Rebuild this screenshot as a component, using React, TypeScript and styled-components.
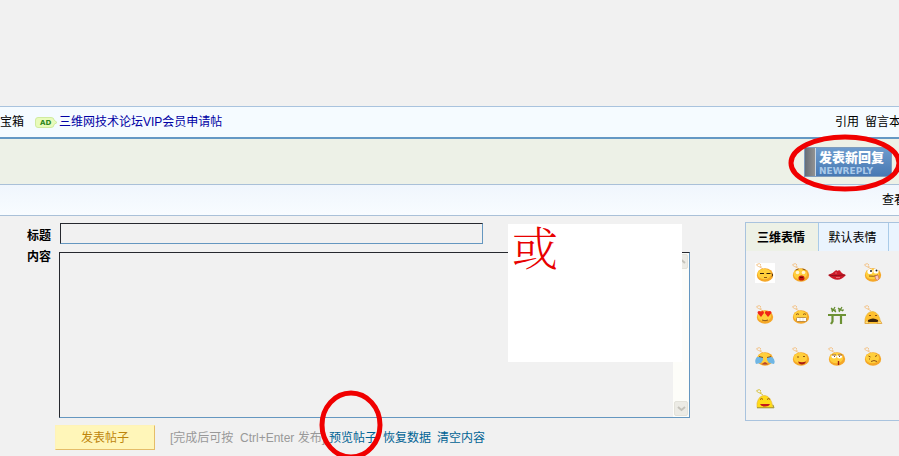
import React from 'react';
import styled, { createGlobalStyle, css } from 'styled-components';

const GlobalStyle = createGlobalStyle`
  * { box-sizing: border-box; }
  body {
    margin: 0;
    overflow: hidden;
    background: #f1f1f1;
    color: #000;
    font: 12px/16px "Liberation Sans", "Noto Sans CJK SC", sans-serif;
  }
  button, input, textarea { font: inherit; }
`;

const Page = styled.div`
  min-height: 100vh;
  padding-top: 106px;
  overflow: hidden;
  white-space: nowrap;
`;

const NavBar = styled.nav`
  display: flex;
  align-items: center;
  height: 33px;
  border-top: 1px solid #a9c3de;
  border-bottom: 2px solid #6498c4;
  background: #f5fbff;
`;

const NavLink = styled.a<{ $tone?: 'blue' }>`
  color: ${p => (p.$tone === 'blue' ? '#0000a4' : '#000')};
  text-decoration: none;
`;

const AdBadge = styled.svg`
  flex: none;
  width: 23px;
  height: 11px;
  margin: 0 1px 0 11px;
`;

const EdgeLinks = styled.div<{ $width: number }>`
  display: flex;
  gap: 6px;
  width: ${p => p.$width}px;
  margin-left: auto;
`;

const ReplyBand = styled.div`
  display: flex;
  justify-content: flex-end;
  align-items: center;
  height: 45px;
  padding-right: 7px;
  background: #edf1e7;
`;

const Marked = styled.div`
  position: relative;
  display: flex;
`;

const ReplyButton = styled.button`
  display: flex;
  align-items: stretch;
  width: 88px;
  height: 30px;
  padding: 0;
  border: 1px solid #7e9cbd;
  background: linear-gradient(#6d9bcd, #4879b3);
  color: #fff;
  text-align: left;
`;

const ReplyStripe = styled.span`
  width: 11px;
  border-right: 1px solid #c9d5e1;
  background: linear-gradient(90deg, #666e78, #929292);
`;

const ReplyText = styled.span`
  display: flex;
  flex: 1;
  flex-direction: column;
  justify-content: center;
  padding-left: 3px;
  font-size: 13px;
  font-weight: 900;
  line-height: 18px;
`;

const ReplyCaption = styled.small`
  color: #a9c9ea;
  font: bold 9px/8px "DejaVu Sans", sans-serif;
`;

const RedRing = styled.svg<{ $top: number; $left: number; $w: number; $h: number }>`
  position: absolute;
  top: ${p => p.$top}px;
  left: ${p => p.$left}px;
  width: ${p => p.$w}px;
  height: ${p => p.$h}px;
  overflow: visible;
  pointer-events: none;
  z-index: 2;
`;

const SubBar = styled.div`
  display: flex;
  align-items: center;
  height: 32px;
  border: solid #a9c0d8;
  border-width: 1px 0;
  background: linear-gradient(#f0f6fd, #f8fcff);
`;

const Main = styled.main`
  display: flex;
  align-items: flex-start;
  gap: 55px;
  padding-top: 6px;
`;

const Form = styled.form`
  position: relative;
  flex: 1;
  min-width: 0;
  display: grid;
  grid-template-columns: 51px minmax(0, 1fr);
  column-gap: 8px;
  row-gap: 8px;
  padding-top: 1px;
`;

const FieldLabel = styled.label`
  padding-top: 5px;
  text-align: right;
  font-weight: bold;
  &[for='content'] { padding-top: 0; margin-top: -3px; }
`;

const fieldEdge = css`
  border: 1px solid;
  border-color: #26282e #6597c0 #6597c0 #26282e;
`;

const TitleInput = styled.input`
  ${fieldEdge}
  width: 67%;
  height: 21px;
  padding: 0 4px;
  margin-left: 1px;
  background: transparent;
`;

const Editor = styled.div`
  ${fieldEdge}
  display: flex;
  height: 166px;
`;

const Content = styled.textarea`
  flex: 1;
  min-width: 0;
  padding: 2px;
  border: 0;
  resize: none;
  background: transparent;
`;

const ScrollTrack = styled.div`
  display: flex;
  flex-direction: column;
  justify-content: space-between;
  width: 16px;
  padding: 1px;
  background: #fdfdf9;
`;

const ScrollButton = styled.button`
  display: flex;
  align-items: center;
  justify-content: center;
  height: 15px;
  padding: 0;
  border: 1px solid #e3e2da;
  border-radius: 2px;
  background: #ecebe5;
`;

const Note = styled.div`
  position: absolute;
  top: 2px;
  right: 8px;
  width: 174px;
  height: 138px;
  padding-left: 4px;
  background: #fff;
  color: #e80000;
  font: 300 46px/42px "Noto Serif CJK SC", "Noto Sans CJK SC", serif;
`;

const Actions = styled.div`
  grid-column: 1 / -1;
  display: flex;
  align-items: center;
  gap: 6px;
  margin-top: -1px;
  padding-left: 55px;
`;

const Submit = styled.button`
  width: 100px;
  height: 25px;
  margin-right: 9px;
  padding: 1px 0 0;
  border: 1px solid;
  border-color: #fff3b8 #e5bd68 #e5bd68 #fff3b8;
  background: #fff6b9;
  color: #bd850c;
`;

const Hint = styled.span`
  width: 153px;
  padding-top: 1px;
  color: #999;
`;

const Action = styled.button`
  padding: 1px 0 0;
  border: 0;
  background: none;
  color: #006394;
`;

const Panel = styled.aside`
  width: 154px;
  height: 199px;
  border: solid #a9c3de;
  border-width: 1px 0 1px 1px;
`;

const Tabs = styled.div`
  display: flex;
  height: 28px;
`;

const Tab = styled.button<{ $active?: boolean }>`
  flex: none;
  width: ${p => (p.$active ? 73 : 70)}px;
  padding: 1px 2px 0 0;
  border: 0;
  border-right: 1px solid #a9cbe8;
  background: ${p => (p.$active ? '#edf1e6' : '#eaf4fe')};
  font-weight: ${p => (p.$active ? 'bold' : 'normal')};
`;

const TabRest = styled.div`
  flex: 1;
  background: #eaf4fe;
`;

const Faces = styled.div`
  display: grid;
  grid-template-columns: repeat(4, 20px);
  gap: 22px 16px;
  padding: 12px 0 0 9px;
`;

const FaceButton = styled.button<{ $white?: boolean }>`
  display: block;
  width: 20px;
  height: 20px;
  padding: 0;
  border: 0;
  background: ${p => (p.$white ? '#fff' : 'none')};
  svg { display: block; }
`;

const ink = { fill: 'none', stroke: '#8f5416', strokeWidth: 1 };

const features: Record<string, React.ReactNode> = {
  sleepy: (
    <>
      <path d="M5 10.500h4M11.500 10.500h4" fill="none" stroke="#33200b" strokeWidth="1.200" />
      <path d="M9 14.500h3" {...ink} />
      <path d="M17 10.500q1.500 1.500 0 3" fill="none" stroke="#5a3a14" />
    </>
  ),
  shocked: (
    <>
      <circle cx="6.500" cy="9.500" r="1.800" fill="#fff6d6" /><circle cx="12.500" cy="9.500" r="1.800" fill="#fff6d6" />
      <path d="M4.500 7l3-1M11.500 6l3 1" {...ink} />
      <ellipse cx="10.500" cy="15" rx="3" ry="2.600" fill="#c51a0c" />
      <path d="M9 14.500h3" stroke="#6d0b04" />
    </>
  ),
  tongue: (
    <>
      <circle cx="7" cy="8.500" r="2.600" fill="#fff" /><circle cx="13" cy="8" r="2.600" fill="#fff" />
      <circle cx="8" cy="8" r="1" fill="#222" /><circle cx="13.500" cy="7.500" r="1" fill="#222" />
      <path d="M6 13q5 1 9-1" {...ink} />
      <path d="M12 13l3-1 1 4q-1.500 2.500-3.500 0z" fill="#f9c5bc" stroke="#c9664e" strokeWidth=".6" />
    </>
  ),
  love: (
    <>
      <path d="M6 12L2.500 8Q2.500 5 6 6.500Q9 5 9 8zM13 12L9.800 8Q10 5 13 6.500Q16.500 5 16.500 8z" fill="#ef2517" />
      <path d="M7 15q3 1.500 6 0" {...ink} />
    </>
  ),
  grin: (
    <>
      <path d="M5 9.500q2-1.500 3 0M12 9.500q2-1.500 3 0" {...ink} />
      <rect x="5.500" y="12.500" width="10" height="4" rx="1" fill="#fff" stroke="#a8701f" strokeWidth=".7" />
      <path d="M9 13v3M12 13v3" stroke="#ccc" strokeWidth=".6" />
    </>
  ),
  cry: (
    <>
      <path d="M2 10h6v3l-2 3-5 1q-2-4 1-7zM12 10h5q4 3 2 7l-5-1-2-3z" fill="#6fb6e4" />
      <path d="M4 9.500l4 1M12 10.500l4-1" {...ink} />
      <path d="M7 17.500q3-5 6 0z" fill="#b8452c" />
    </>
  ),
  laugh: (
    <>
      <path d="M6 10h2M12 9.500h2" {...ink} />
      <path d="M7 14.500q4 1.500 8 0-1 3-4 3t-4-3z" fill="#a91d13" />
    </>
  ),
  drool: (
    <>
      <ellipse cx="7" cy="9.500" rx="2.600" ry="2" fill="#fff" /><ellipse cx="12.500" cy="9.500" rx="2.600" ry="2" fill="#fff" />
      <path d="M5 8h4M11 8h4M7 9.500h1M12 9.500h1" {...ink} />
      <path d="M11.500 14v4" stroke="#a32112" strokeWidth="1.400" />
    </>
  ),
  angry: <path d="M5.500 9l2 1M12 9.500l2-1M8 14.500q3-2 6 0M6 12h1" {...ink} />,
  peek: (
    <>
      <path d="M6 10.500h2M12 10.500h2" {...ink} />
      <path d="M5 15q5-3 10 0v2H5z" fill="#3d250c" />
      <path d="M2 18.500q0-4 3-2l1 2zM14 18.500q1-4 4-2l1 2z" fill="#ffe27a" stroke="#dc9430" strokeWidth=".6" />
    </>
  ),
  bow: (
    <>
      <path d="M5 10.500q2-2 3 0M12 10.500q2-2 3 0" {...ink} />
      <path d="M5 15h10q-1 2.500-5 2.500T5 15z" fill="#c51a1a" />
      <path d="M2 18.800h17l-1-3" fill="none" stroke="#8d8410" strokeWidth=".8" />
    </>
  ),
};

function FaceIcon({ kind }: { kind: string }) {
  if (kind === 'lips') {
    return (
      <svg viewBox="0 0 20 20" aria-hidden="true">
        <path d="M1 12q5-1.500 7.500-4.500 1.500-.5 2 .5 1-1 2.500-.5Q14.500 10.500 19 12q-4 4.500-8.500 4.800Q5.500 16.500 1 12z" fill="#cb1a28" />
        <path d="M2 12q5 1 8.500 .5T18 12" fill="none" stroke="#86101a" strokeWidth=".9" />
        <path d="M8 10h2M9 14.500h4" stroke="#f07a80" strokeWidth=".8" />
      </svg>
    );
  }
  if (kind === 'table') {
    return (
      <svg viewBox="0 0 20 20" aria-hidden="true">
        <path d="M1 10h18M5.500 10v6.500L4 19M14 10v9" fill="none" stroke="#6c9134" strokeWidth="2.200" />
        <path d="M4 3l5 4M8 2L5 7M4 5h5M11 3l5 3M15 2l-3 5M11 5h6" stroke="#628a2c" strokeWidth="1.200" />
      </svg>
    );
  }
  const flat = kind === 'peek' || kind === 'bow';
  return (
    <svg viewBox="0 0 20 20" aria-hidden="true">
      <path d="M6 2Q5 0 2.500 1T3.500 3.500 5.500 2.500M5 4l3 2" fill="none" stroke={kind === 'bow' ? '#d2bd2c' : '#f3bd7c'} strokeWidth=".9" />
      {flat ? (
        <path d="M2 18.500V14Q4 6 10 6.500t8 12z" fill={kind === 'bow' ? '#ffdb18' : '#ffc02e'} stroke="#e4b33a" strokeWidth=".6" />
      ) : (
        <>
          <ellipse cx="10" cy="12" rx="8.200" ry="6.800" fill="#f5a727" />
          <ellipse cx="9.300" cy="11" rx="6.800" ry="5.300" fill="#ffcf3c" />
        </>
      )}
      {features[kind]}
    </svg>
  );
}

const faces: [string, string][] = [
  ['sleepy', '困'], ['shocked', '惊讶'], ['lips', '亲吻'], ['tongue', '吐舌'],
  ['love', '喜爱'], ['grin', '呲牙'], ['table', '桌子'], ['peek', '偷看'],
  ['cry', '大哭'], ['laugh', '大笑'], ['drool', '流口水'], ['angry', '生气'],
  ['bow', '拜'],
];

function Chevron({ up = false }: { up?: boolean }) {
  return (
    <svg width="9" height="7" viewBox="0 0 9 7" aria-hidden="true">
      <path d={up ? 'M1 5l3.500-3L8 5' : 'M1 2l3.500 3L8 2'} fill="none" stroke="#c4c2ba" strokeWidth="2" />
    </svg>
  );
}

export default function App() {
  return (
    <Page>
      <GlobalStyle />
      <NavBar>
        <NavLink href="#box">宝箱</NavLink>
        <AdBadge viewBox="0 0 23 11" aria-label="AD">
          <path d="M3 .5h13q3 0 3 2.500l3 2.500-3 2q0 3-3 3H3Q.5 10.500.5 8V3Q.5.500 3 .500z" fill="#e8fbba" stroke="#d0eba0" />
          <text x="5" y="8" fontFamily="DejaVu Sans" fontSize="7" fontWeight="bold" fill="#2c851c">AD</text>
        </AdBadge>
        <NavLink href="#vip" $tone="blue">三维网技术论坛VIP会员申请帖</NavLink>
        <EdgeLinks $width={64}>
          <NavLink href="#quote">引用</NavLink>
          <NavLink href="#guestbook">留言本</NavLink>
        </EdgeLinks>
      </NavBar>
      <ReplyBand>
        <Marked>
          <ReplyButton type="button">
            <ReplyStripe />
            <ReplyText>
              发表新回复
              <ReplyCaption>NEWREPLY</ReplyCaption>
            </ReplyText>
          </ReplyButton>
          <RedRing $top={-13} $left={-16} $w={112} $h={58} viewBox="0 0 112 58" aria-hidden="true">
            <ellipse cx="57" cy="29" rx="54" ry="26" fill="none" stroke="#f00000" strokeWidth="5" />
          </RedRing>
        </Marked>
      </ReplyBand>
      <SubBar>
        <EdgeLinks $width={17}>
          <NavLink href="#view">查看</NavLink>
        </EdgeLinks>
      </SubBar>
      <Main>
        <Form onSubmit={e => e.preventDefault()}>
          <FieldLabel htmlFor="title">标题</FieldLabel>
          <TitleInput id="title" />
          <FieldLabel htmlFor="content">内容</FieldLabel>
          <Editor>
            <Content id="content" />
            <ScrollTrack>
              <ScrollButton type="button" aria-label="向上滚动"><Chevron up /></ScrollButton>
              <ScrollButton type="button" aria-label="向下滚动"><Chevron /></ScrollButton>
            </ScrollTrack>
          </Editor>
          <Actions>
            <Submit type="submit">发表帖子</Submit>
            <Hint>[完成后可按 &nbsp;Ctrl+Enter 发布]</Hint>
            <Marked>
              <Action type="button">预览帖子</Action>
              <RedRing $top={-38} $left={-10} $w={64} $h={68} viewBox="0 0 64 68" aria-hidden="true">
                <ellipse cx="32" cy="34" rx="29" ry="32" fill="none" stroke="#f00000" strokeWidth="5" />
              </RedRing>
            </Marked>
            <Action type="button">恢复数据</Action>
            <Action type="button">清空内容</Action>
          </Actions>
          <Note>或</Note>
        </Form>
        <Panel>
          <Tabs>
            <Tab type="button" $active>三维表情</Tab>
            <Tab type="button">默认表情</Tab>
            <TabRest />
          </Tabs>
          <Faces>
            {faces.map(([kind, name]) => (
              <FaceButton key={kind} type="button" aria-label={name} $white={kind === 'sleepy'}>
                <FaceIcon kind={kind} />
              </FaceButton>
            ))}
          </Faces>
        </Panel>
      </Main>
    </Page>
  );
}
